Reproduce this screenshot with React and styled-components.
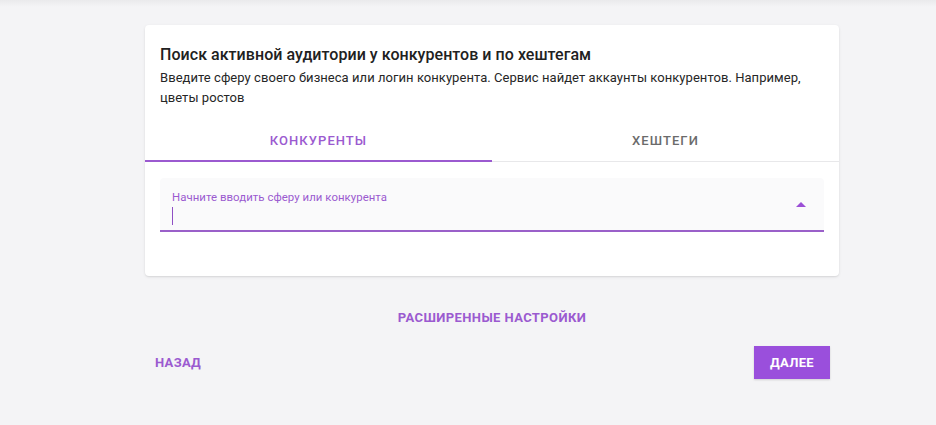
import React from "react";
import styled, { createGlobalStyle } from "styled-components";

const Global = createGlobalStyle`
  html, body { margin: 0; padding: 0; background: #f4f4f6; }
  body { font-family: Roboto, "Noto Sans", sans-serif; }
  * { box-sizing: border-box; }
`;

const Page = styled.div`
  width: 936px;
  height: 425px;
  padding: 25px 97px 0 145px;
  background: linear-gradient(#eaeaec 0, #f4f4f6 7px, #f4f4f6 100%);
`;

const Card = styled.div`
  background: #fff;
  border-radius: 4px;
  box-shadow: 0 1px 3px rgba(0,0,0,0.10), 0 1px 1px rgba(0,0,0,0.04);
  padding-bottom: 44px;
`;

const Header = styled.div`
  padding: 19px 15px 0 15px;
`;

const Title = styled.h2`
  margin: 0;
  font-size: 16px;
  font-weight: 500;
  color: #212121;
  line-height: 22px;
  letter-spacing: 0.05px;
`;

const Desc = styled.p`
  margin: 2px 0 0 0;
  font-size: 13px;
  line-height: 20px;
  color: #262626;
  letter-spacing: 0.05px;
`;

const Tabs = styled.div`
  display: flex;
  margin-top: 17px;
  border-bottom: 1px solid #e8e8ea;
`;

const Tab = styled.div`
  flex: 1;
  height: 37px;
  padding-bottom: 5px;
  display: flex;
  align-items: center;
  justify-content: center;
  font-size: 13px;
  font-weight: 500;
  letter-spacing: 1.05px;
  text-transform: uppercase;
  color: ${p => (p.$active ? "#9b5ad0" : "#6b6b6b")};
  border-bottom: 2px solid ${p => (p.$active ? "#9b5ad0" : "transparent")};
  margin-bottom: -1px;
`;

const Body = styled.div`
  padding: 16px 15px 0 15px;
`;

const Field = styled.div`
  position: relative;
  height: 54px;
  background: #fafafb;
  border-bottom: 2px solid #9a60c9;
  border-radius: 4px 4px 0 0;
  padding: 12px 12px 0 12px;
`;

const Label = styled.div`
  font-size: 11.4px;
  line-height: 14px;
  color: #9b5ad0;
  letter-spacing: 0.05px;
`;

const Caret = styled.div`
  width: 1px;
  height: 18px;
  margin-top: 3px;
  background: #8f4fc4;
`;

const Arrow = styled.div`
  position: absolute;
  right: 18px;
  top: 24px;
  width: 0;
  height: 0;
  border-left: 5px solid transparent;
  border-right: 5px solid transparent;
  border-bottom: 5px solid #9b4fd6;
`;

const Advanced = styled.div`
  display: flex;
  justify-content: center;
  margin-top: 34px;
  font-size: 13px;
  font-weight: 700;
  color: #9b5ad0;
  letter-spacing: 0.4px;
  text-transform: uppercase;
`;

const Actions = styled.div`
  display: flex;
  justify-content: space-between;
  align-items: center;
  margin-top: 21px;
  padding-right: 9px;
`;

const TextButton = styled.div`
  padding: 0 10px;
  height: 33px;
  display: flex;
  align-items: center;
  font-size: 13px;
  font-weight: 700;
  color: #9b5ad0;
  letter-spacing: 0.3px;
`;

const PrimaryButton = styled.div`
  width: 76px;
  height: 33px;
  display: flex;
  align-items: center;
  justify-content: center;
  background: #9a4fdc;
  color: #fff;
  font-size: 13px;
  font-weight: 700;
  letter-spacing: 0.3px;
  box-shadow: 0 1px 2px rgba(0,0,0,0.15);
`;

export default function App() {
  return (
    <>
      <Global />
      <Page>
        <Card>
          <Header>
            <Title>Поиск активной аудитории у конкурентов и по хештегам</Title>
            <Desc>
              Введите сферу своего бизнеса или логин конкурента. Сервис найдет аккаунты конкурентов. Например, цветы ростов
            </Desc>
          </Header>
          <Tabs>
            <Tab $active>Конкуренты</Tab>
            <Tab>Хештеги</Tab>
          </Tabs>
          <Body>
            <Field>
              <Label>Начните вводить сферу или конкурента</Label>
              <Caret />
              <Arrow />
            </Field>
          </Body>
        </Card>
        <Advanced>Расширенные настройки</Advanced>
        <Actions>
          <TextButton>НАЗАД</TextButton>
          <PrimaryButton>ДАЛЕЕ</PrimaryButton>
        </Actions>
      </Page>
    </>
  );
}
